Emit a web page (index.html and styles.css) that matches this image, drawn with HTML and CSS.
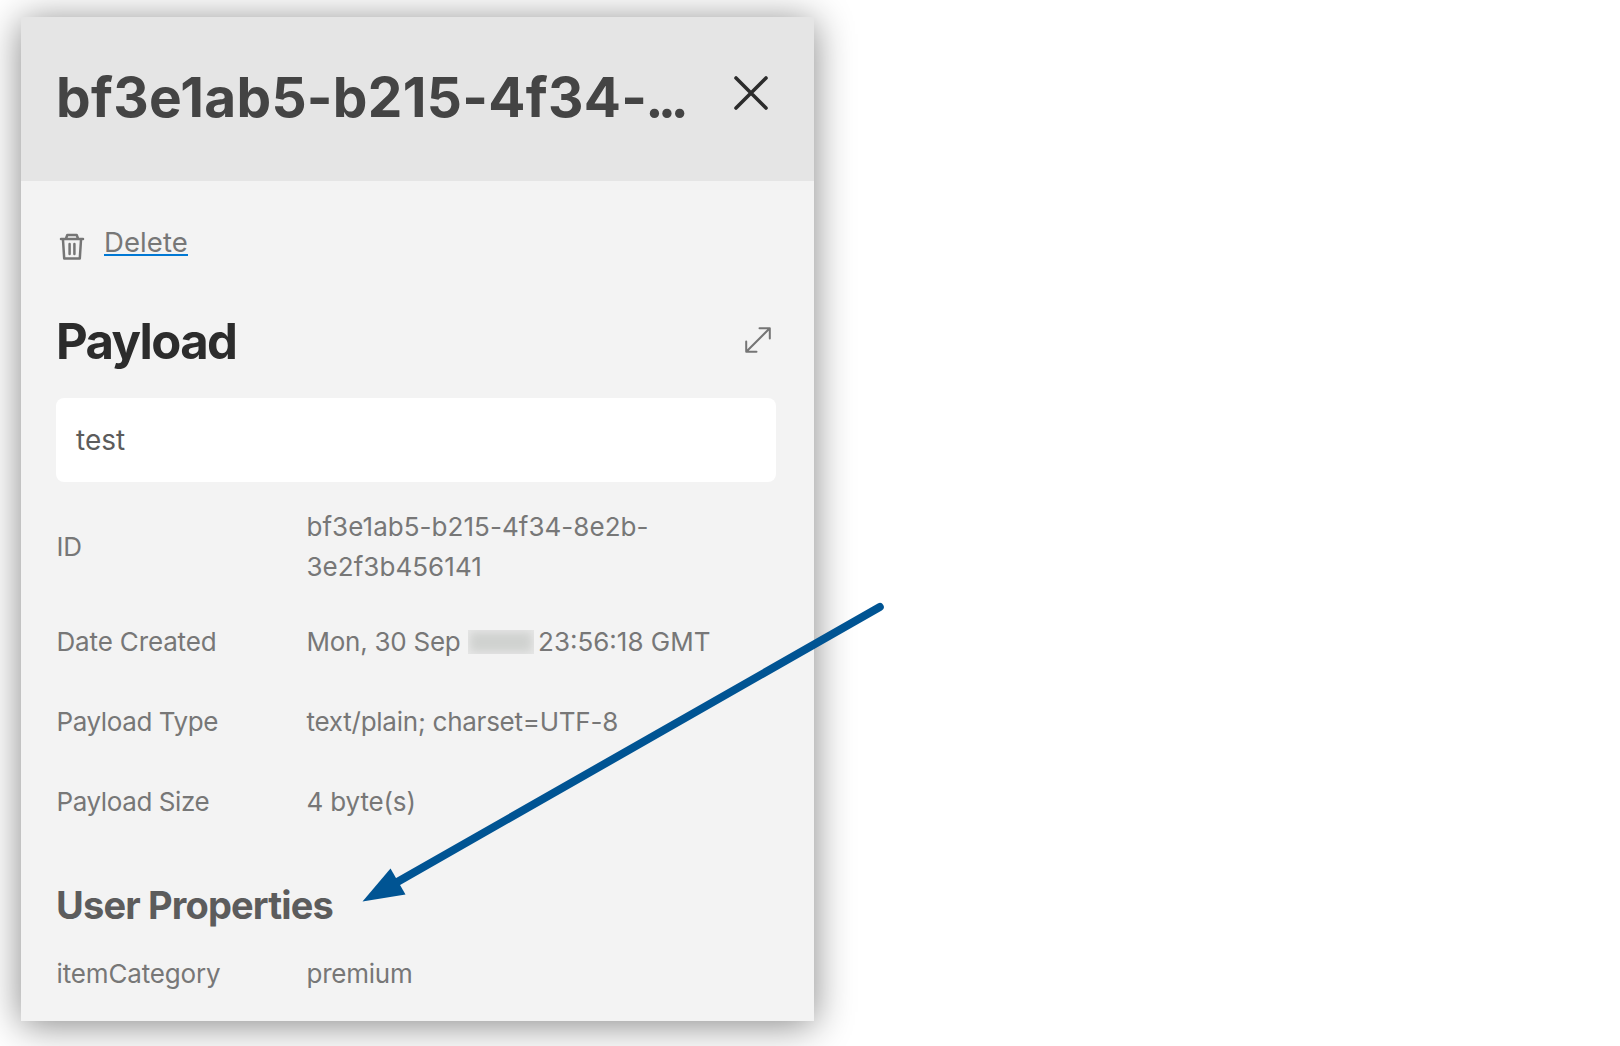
FILE: index.html
```html
<!DOCTYPE html>
<html lang="en">
<head>
<meta charset="utf-8">
<title>Message details</title>
<link rel="stylesheet" href="styles.css">
</head>
<body>
<aside class="panel">
  <header class="panel-header">
    <h1 class="title">bf3e1ab5-b215-4f34-<span class="dots">...</span></h1>
    <svg class="close" viewBox="0 0 36 36"><path d="M3 3L33 33M33 3L3 33"/></svg>
  </header>
  <div class="panel-body">
    <div class="action">
      <svg class="trash" viewBox="0 0 26 30"><path d="M2 7H24M7 6.5L8.3 3H17.7L19 6.5M4 8L5.200 26.500H20.800L22 8M10.600 12V22M15.400 12V22"/></svg>
      <a class="delete">Delete</a>
    </div>
    <div class="payload-head">
      <h2 class="payload-title">Payload</h2>
      <svg class="expand" viewBox="0 0 28 28"><path d="M2.500 25.500L25.500 2.500M15.500 2.200H25.800V12.500M12.500 25.800H2.200V15.500"/></svg>
    </div>
    <div class="payload-box">test</div>
    <dl class="props">
      <div class="row row-id"><dt>ID</dt><dd class="v-id">bf3e1ab5-b215-4f34-8e2b-3e2f3b456141</dd></div>
      <div class="row"><dt class="loose">Date Created</dt><dd class="v-date"><span>Mon, 30 Sep</span><span class="redacted"></span><span class="time">23:56:18 GMT</span></dd></div>
      <div class="row"><dt class="tight">Payload Type</dt><dd>text/plain; charset=UTF-8</dd></div>
      <div class="row"><dt class="tight">Payload Size</dt><dd class="loose">4 byte(s)</dd></div>
    </dl>
    <h3 class="user-title">User Properties</h3>
    <dl class="props">
      <div class="row row-user"><dt class="loose">itemCategory</dt><dd>premium</dd></div>
    </dl>
  </div>
</aside>
<svg class="pointer" viewBox="0 0 1620 1046"><path class="shaft" d="M879.800 607L392 885"/><path class="head" d="M362.500 901.500L390.500 868.500L405.500 894.500Z"/></svg>
</body>
</html>
```

FILE: styles.css
```css
* { box-sizing: border-box; }
body {
  margin: 0;
  padding: 17px 0 0 21px;
  height: 1046px;
  overflow: hidden;
  background: #fff;
  font-family: Inter, "Liberation Sans", sans-serif;
  font-weight: 430;
  color: #777;
}
h1, h2, h3, dl, dt, dd { margin: 0; }
svg { flex: none; fill: none; stroke-linecap: round; stroke-linejoin: round; }
.panel {
  width: 793px;
  height: 1004px;
  background: #f3f3f3;
  box-shadow: 0 4px 36px rgba(0, 0, 0, .48);
}
.panel-header {
  height: 164px;
  padding: 0 45px 0 35px;
  display: flex;
  align-items: center;
  justify-content: space-between;
  background: #e5e5e5;
}
.title {
  margin-bottom: 5px;
  white-space: nowrap;
  font-size: 55px;
  line-height: 68px;
  font-weight: 730;
  letter-spacing: .3px;
  color: #444;
}
.dots { margin-left: -2px; letter-spacing: -5.800px; }
.close { width: 36px; height: 36px; margin-bottom: 12px; stroke: #2c2c2c; stroke-width: 3.600; }
.panel-body { padding: 41px 38px 0 35px; }
.action { height: 40px; display: flex; }
.trash { width: 26px; height: 30px; margin: 10px 19px 0 3px; stroke: #757575; stroke-width: 2.500; }
.delete {
  height: 34px;
  line-height: 40px;
  font-size: 27.500px;
  letter-spacing: .1px;
  border-bottom: 2px solid #0078d4;
}
.payload-head {
  margin-top: 50px;
  height: 60px;
  padding-right: 4px;
  display: flex;
  align-items: center;
  justify-content: space-between;
}
.payload-title { font-size: 49px; line-height: 60px; font-weight: 680; letter-spacing: -1.600px; color: #2c2c2c; }
.expand { width: 28px; height: 28px; margin-bottom: 4px; stroke: #757575; stroke-width: 2; }
.payload-box {
  margin-top: 26px;
  height: 84px;
  padding: 0 20px;
  border-radius: 8px;
  background: #fff;
  font-size: 28px;
  line-height: 85px;
  color: #5c5c5c;
}
.props { margin-top: 10px; padding-left: .5px; font-size: 26px; line-height: 40px; letter-spacing: -.250px; }
.row { display: grid; grid-template-columns: 250px 1fr; align-items: center; height: 80px; white-space: nowrap; }
.row-id { height: 110px; }
.tight { letter-spacing: -.400px; }
.loose { letter-spacing: -.150px; }
.v-id { width: 400px; white-space: normal; letter-spacing: .040px; }
.v-date { display: flex; align-items: center; }
.time { letter-spacing: 0; }
.redacted {
  width: 66px;
  height: 24px;
  margin: 0 4px 0 7.500px;
  background: #d0d2d0;
  box-shadow: inset 0 0 9px 2px #e8e8e8;
}
.user-title { margin-top: 40px; font-size: 38px; line-height: 46px; font-weight: 660; letter-spacing: -.850px; color: #5c5c5c; }
.user-title + .props { margin-top: 26px; }
.row-user { height: 40px; }
.pointer { position: absolute; left: 0; top: 0; width: 1620px; height: 1046px; }
.shaft { stroke: #005493; stroke-width: 8; }
.head { fill: #005493; }
```
